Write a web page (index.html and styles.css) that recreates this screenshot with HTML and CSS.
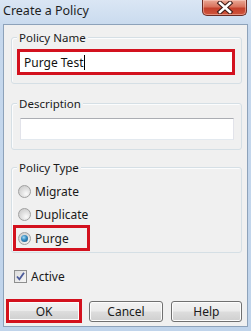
FILE: index.html
```html
<!DOCTYPE html>
<html>
<head>
<meta charset="utf-8">
<link rel="stylesheet" href="styles.css">
</head>
<body>
<div class="window">
  <div class="titlebar">
    <span class="title">Create a Policy</span>
    <div class="close">
      <svg width="18" height="13" viewBox="0 0 18 13">
        <path d="M4 2 L14 11 M14 2 L4 11" stroke="#3b1a16" stroke-width="4.6" stroke-linecap="square"/>
        <path d="M4 2 L14 11 M14 2 L4 11" stroke="#ffffff" stroke-width="2.6" stroke-linecap="square"/>
      </svg>
    </div>
  </div>
  <div class="client">
    <div class="group g-name">
      <span class="legend">Policy Name</span>
      <div class="redbox name-box">
        <div class="field field-name">Purge Test<span class="caret"></span></div>
      </div>
    </div>
    <div class="group g-desc">
      <span class="legend">Description</span>
      <div class="field field-desc"></div>
    </div>
    <div class="group g-type">
      <span class="legend">Policy Type</span>
      <div class="opt"><span class="radio"></span><span>Migrate</span></div>
      <div class="opt opt-2"><span class="radio"></span><span>Duplicate</span></div>
      <div class="redbox purge-box">
        <div class="opt opt-sel"><span class="radio checked"></span><span>Purge</span></div>
      </div>
    </div>
    <div class="active-row">
      <span class="check">
        <svg width="11" height="11" viewBox="0 0 11 11">
          <path d="M2 5.5 L4.4 8.3 L9 1.8" fill="none" stroke="#4a5a9a" stroke-width="1.8"/>
        </svg>
      </span>
      <span>Active</span>
    </div>
    <div class="buttons">
      <div class="redbox ok-box"><div class="btn btn-ok">OK</div></div>
      <div class="btn btn-cancel">Cancel</div>
      <div class="btn btn-help">Help</div>
    </div>
  </div>
</div>
</body>
</html>
```
FILE: styles.css
```css
html, body {
  margin: 0;
  padding: 0;
}
body {
  width: 251px;
  height: 331px;
  overflow: hidden;
  font-family: "Noto Sans", "Open Sans", sans-serif;
  font-size: 11px;
  color: #1a1a1a;
}
.window {
  width: 251px;
  height: 331px;
  box-sizing: border-box;
  background: linear-gradient(#dae6f4, #c6d8ed 30px, #c0d4eb);
  padding: 0 3px 4px 3px;
  display: flex;
  flex-direction: column;
}
.titlebar {
  height: 24px;
  display: flex;
  justify-content: space-between;
  align-items: flex-start;
}
.title {
  font-size: 12.5px;
  line-height: 22px;
  color: #1e1e1e;
}
.close {
  width: 45px;
  height: 16px;
  box-sizing: border-box;
  margin-right: 1px;
  border: 1px solid #6b2c24;
  border-top: none;
  border-radius: 0 0 5px 5px;
  background: linear-gradient(#eaa996, #d9735d 45%, #c4412c 55%, #d0553c);
  box-shadow: inset 0 0 0 1px rgba(255,220,210,0.45);
  display: flex;
  align-items: center;
  justify-content: center;
}
.client {
  flex: 1;
  background: #f0f0f0;
  border: 1px solid #8da2ba;
  padding: 0 5px 3px 1px;
  display: flex;
  flex-direction: column;
}
.group {
  position: relative;
  margin-left: 6px;
  border: 1px solid #d5dfe5;
  border-radius: 3px;
  box-shadow: inset 1px 1px 0 #fbfcfd;
}
.legend {
  position: absolute;
  left: 5px;
  top: -8px;
  line-height: 15px;
  padding: 0 2px;
  background: #f0f0f0;
  font-size: 11.5px;
}
.g-name {
  margin-top: 12px;
  padding: 11px 0 8px 5px;
}
.g-desc {
  margin-top: 19px;
  padding: 14px 0 9px 8px;
}
.g-type {
  margin-top: 17px;
  padding: 13px 0 1px 0;
}
.redbox {
  border: 3px solid #d3111e;
  box-sizing: border-box;
}
.name-box {
  width: 218px;
  height: 26px;
}
.field {
  background: #ffffff;
  box-sizing: border-box;
}
.field-name {
  height: 20px;
  line-height: 19px;
  padding-left: 4px;
  font-size: 12px;
  color: #111;
  display: flex;
  align-items: center;
}
.caret {
  display: inline-block;
  width: 1px;
  height: 15px;
  background: #000;
  margin-left: 1px;
}
.field-desc {
  width: 214px;
  height: 22px;
  border: 1px solid #e2e3ea;
  border-top-color: #abadb3;
  border-bottom-color: #e3e9ef;
}
.opt {
  height: 20px;
  display: flex;
  align-items: center;
  padding-left: 6px;
  font-size: 12px;
}
.opt-2 {
  margin-top: 3px;
}
.purge-box {
  margin-top: 1px;
  margin-left: 1px;
  width: 77px;
  height: 26px;
}
.opt-sel {
  padding-left: 2px;
}
.radio {
  width: 13px;
  height: 13px;
  box-sizing: border-box;
  border-radius: 50%;
  border: 1px solid #a0a0a0;
  background: radial-gradient(circle at 65% 70%, #fafafa 0, #e0e0e0 45%, #c4c4c4 100%);
  margin-right: 4px;
  display: flex;
  align-items: center;
  justify-content: center;
}
.radio.checked::after {
  content: "";
  width: 7px;
  height: 7px;
  border-radius: 50%;
  background: radial-gradient(circle at 40% 35%, #a9dcf5 0, #3a8fc4 40%, #154e7a 100%);
}
.active-row {
  margin-top: 15px;
  margin-left: 9px;
  height: 16px;
  display: flex;
  align-items: center;
  font-size: 12px;
}
.check {
  width: 13px;
  height: 13px;
  box-sizing: border-box;
  border: 1px solid #8e8f8f;
  background: linear-gradient(135deg, #dcdcdc, #f6f6f6);
  margin-right: 4px;
  display: flex;
  align-items: center;
  justify-content: center;
}
.buttons {
  margin-top: 15px;
  margin-left: 1px;
  display: flex;
  align-items: center;
}
.btn {
  box-sizing: border-box;
  height: 21px;
  border: 1px solid #707070;
  border-radius: 3px;
  background: linear-gradient(#f2f2f2, #ebebeb 48%, #dddddd 52%, #cfcfcf);
  box-shadow: inset 0 0 0 1px #fcfcfc;
  display: flex;
  align-items: center;
  justify-content: center;
  font-size: 12px;
}
.ok-box {
  width: 77px;
  height: 24px;
}
.btn-ok {
  height: 18px;
  border: none;
  border-radius: 0;
}
.btn-cancel {
  width: 74px;
  margin-left: 7px;
}
.btn-help {
  width: 72px;
  margin-left: 8px;
}
```
